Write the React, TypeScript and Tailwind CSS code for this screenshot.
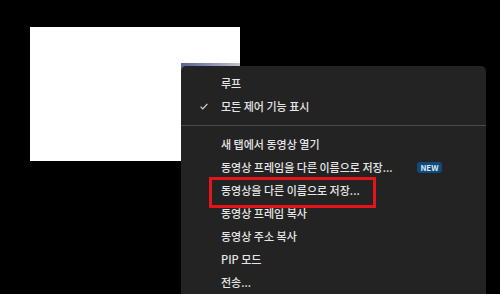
import React from "react";

const font = { fontFamily: '"Noto Sans CJK KR", "Noto Sans", sans-serif' };

function Row({ label, check, badge }: { label: string; check?: boolean; badge?: boolean }) {
  return (
    <div className="flex h-[23px] items-center text-[11px] font-medium text-[#e6e6e6]">
      <span className="flex w-[40px] shrink-0 items-center pl-[19px]">
        {check && (
          <svg width="8" height="7" viewBox="0 0 8 7" fill="none">
            <path d="M0.6 3.6 L2.8 5.8 L7.4 0.8" stroke="#d8d8d8" strokeWidth="1.2" />
          </svg>
        )}
      </span>
      <span className="leading-none">{label}</span>
      {badge && (
        <span className="ml-auto mr-[44px] flex h-[11px] w-[25px] items-center justify-center rounded-[3px] bg-[#11497a] text-[8px] font-bold leading-none text-[#dbe9f7]">
          NEW
        </span>
      )}
    </div>
  );
}

export default function App() {
  return (
    <div className="relative h-[294px] w-[500px] overflow-hidden bg-black" style={font}>
      <div className="ml-[30px] mt-[27px] flex h-[134px] w-[210px] justify-end bg-white pt-[36px]">
        <div className="h-full w-[59px] bg-gradient-to-r from-[#5b6394] via-[#8a8fb5] to-[#c9bfc6]" />
      </div>

      <div className="absolute left-[181px] top-[66px] flex w-[305px] flex-col rounded-[5px] bg-[#232323] pt-[6px] pb-[8px]">
        <Row label="루프" />
        <Row label="모든 제어 기능 표시" check />
        <div className="mt-[7px] mb-[7px] h-[1px] bg-[#4a4a4a]" />
        <Row label="새 탭에서 동영상 열기" />
        <Row label="동영상 프레임을 다른 이름으로 저장..." badge />
        <Row label="동영상을 다른 이름으로 저장..." />
        <Row label="동영상 프레임 복사" />
        <Row label="동영상 주소 복사" />
        <Row label="PIP 모드" />
        <Row label="전송..." />
      </div>

      <div className="absolute left-[209px] top-[177px] h-[31px] w-[167px] border-[3px] border-[#e3141b]" />
    </div>
  );
}
